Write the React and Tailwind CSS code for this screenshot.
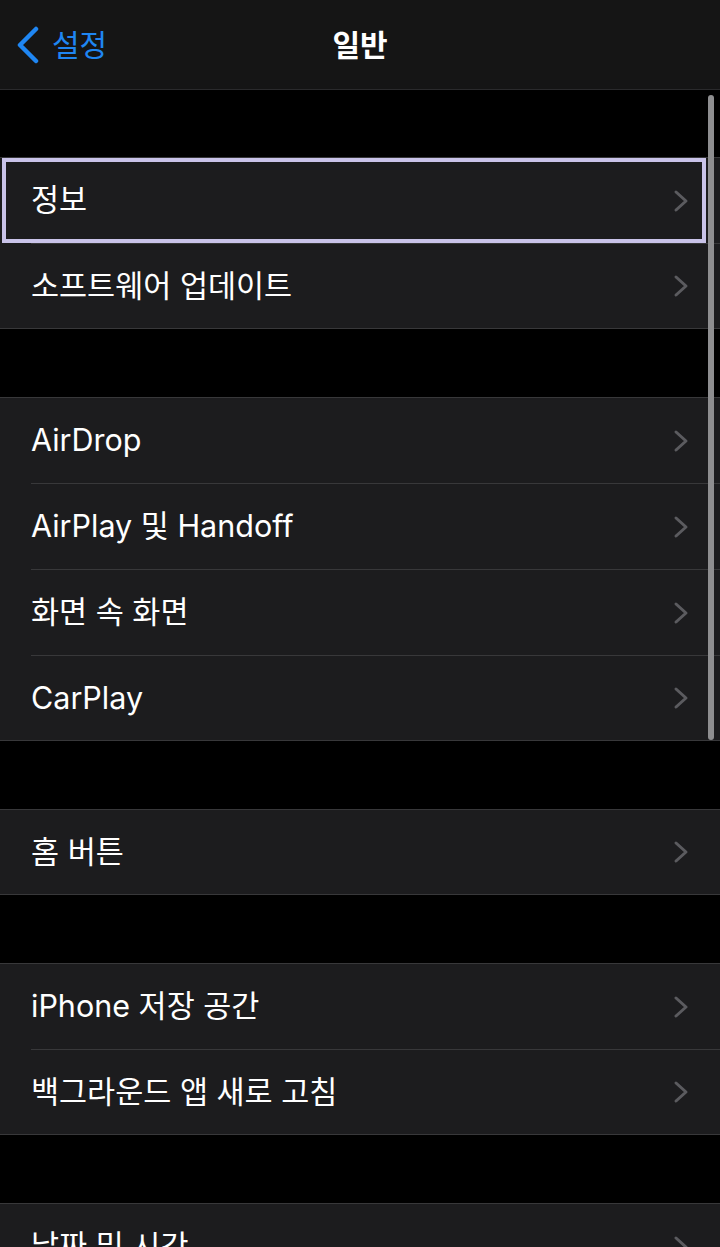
import React from "react";

const font = { fontFamily: 'Inter, "Noto Sans CJK KR", sans-serif' };

const groups = [
  ["정보", "소프트웨어 업데이트"],
  ["AirDrop", "AirPlay 및 Handoff", "화면 속 화면", "CarPlay"],
  ["홈 버튼"],
  ["iPhone 저장 공간", "백그라운드 앱 새로 고침"],
  ["날짜 및 시간", "키보드"],
];

function Chevron() {
  return (
    <svg width="16" height="24" viewBox="0 0 16 24" fill="none" className="shrink-0">
      <polyline
        points="3,3 13,12 3,21"
        stroke="#5b5b5f"
        strokeWidth="3"
        strokeLinecap="round"
        strokeLinejoin="round"
      />
    </svg>
  );
}

function Row({ label, last, focused }) {
  return (
    <div className={"relative flex items-stretch bg-[#1c1c1e] " + (last ? "h-[84px]" : "h-[86px]")}>
      <div
        className={
          "ml-[31px] flex flex-1 items-center justify-between pr-[31px] " +
          (last ? "" : "border-b border-[#38383a]")
        }
      >
        <span className="text-[30.5px] leading-none text-white">{label}</span>
        <Chevron />
      </div>
      {focused && (
        <div className="pointer-events-none absolute left-[2px] top-0 h-[85px] w-[704px] border-[4px] border-[#c9c3e9]" />
      )}
    </div>
  );
}

export default function App() {
  return (
    <div className="relative h-[1247px] w-[720px] overflow-hidden bg-black" style={font}>
      <header className="relative flex h-[90px] items-center justify-center border-b border-[#2a2a2c] bg-[#151515]">
        <div className="absolute left-[15px] top-0 flex h-full items-center gap-[11px] text-[#1f86f2]">
          <svg width="26" height="38" viewBox="0 0 26 38" fill="none">
            <polyline
              points="21,3 5,19 21,35"
              stroke="#1f86f2"
              strokeWidth="4.5"
              strokeLinecap="round"
              strokeLinejoin="round"
            />
          </svg>
          <span className="text-[30px] leading-none">설정</span>
        </div>
        <h1 className="text-[30px] font-semibold leading-none text-white">일반</h1>
      </header>

      <div className="flex flex-col gap-[68px] pt-[67px]">
        {groups.map((g, gi) => (
          <div key={gi} className="border-y border-[#38383a]">
            {g.map((label, i) => (
              <Row
                key={label}
                label={label}
                last={i === g.length - 1}
                focused={gi === 0 && i === 0}
              />
            ))}
          </div>
        ))}
      </div>

      <div className="absolute left-[708px] top-[95px] h-[645px] w-[6px] rounded-full bg-[#8e8e90]" />
    </div>
  );
}
